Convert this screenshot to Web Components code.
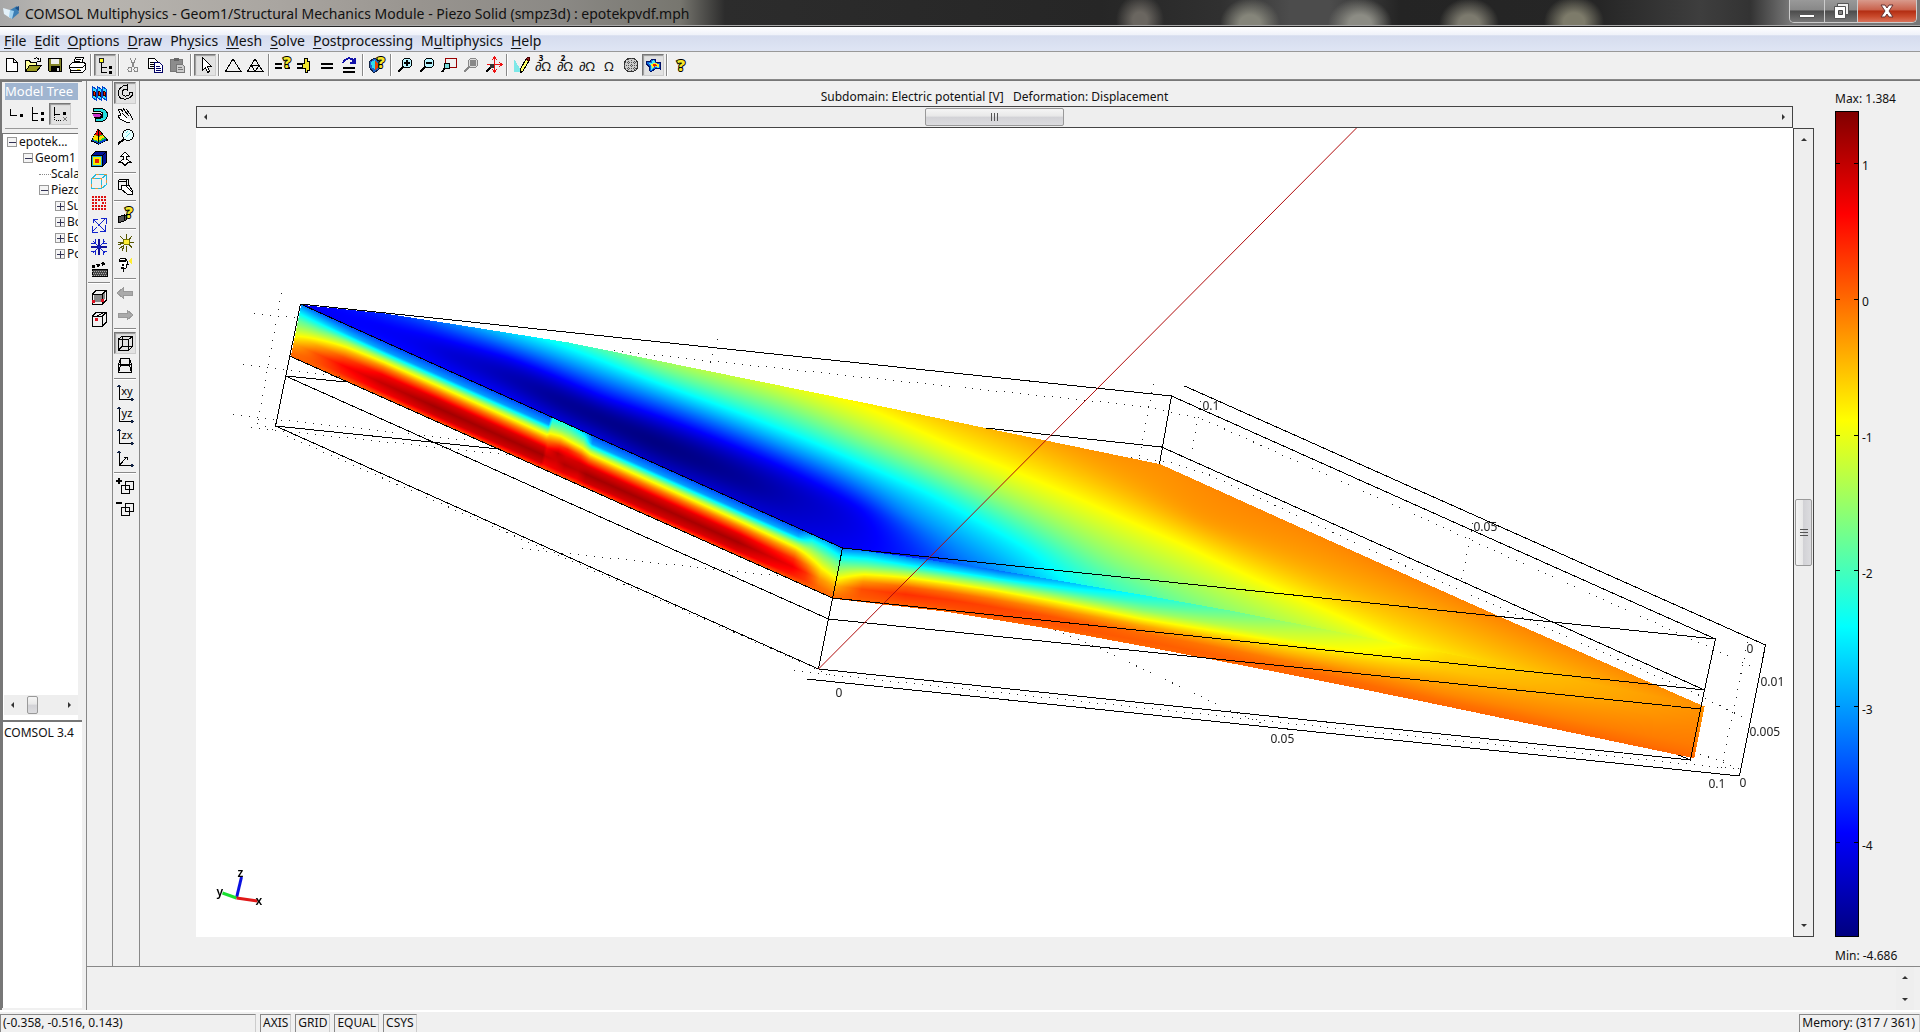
<!DOCTYPE html>
<html lang="en">
<head>
<meta charset="utf-8">
<title>COMSOL Multiphysics</title>
<style>
html,body{margin:0;height:100%;background:#f0f0f0;overflow:hidden}
body{font:12px/16px "Noto Sans","Open Sans",sans-serif;color:#111}
</style>
</head>
<body>
<comsol-app></comsol-app>
<script>
const base = `*{box-sizing:border-box}button{font:inherit;color:inherit;border:0;background:none;padding:0;margin:0}svg{display:block}`;
const define = (name, css, html, setup) => customElements.define(name, class extends HTMLElement {
  connectedCallback() {
    if (this.shadowRoot) return;
    const root = this.attachShadow({mode: "open"});
    root.innerHTML = `<style>${base}${css}</style>${typeof html === "function" ? html(this) : html}`;
    if (setup) setup(root, this);
  }
});

/* ---------- icon set, 20 x 20 grid ---------- */
const P = (d, s = "#000", f = "none", w = 1) => `<path d="${d}" stroke="${s}" fill="${f}" stroke-width="${w}"/>`;
const lens = (g, fill = "#b8f4ff", ink = "#000") => `<circle cx="12" cy="8" r="5" fill="${fill}" stroke="${ink}"/>${P("M8 12L3 17", ink, "none", 2)}${g}`;
const omega = (t, n) => `<text x="10" y="16" text-anchor="middle" font-size="13" fill="#111">${t}</text>${n ? `<text x="8" y="6" text-anchor="middle" font-size="8" font-weight="700">${n}</text>` : ""}`;
const axes = t => P("M4 3V16.5H18") + P("M4 1l2 3H2zM19 16.5l-3-2v4z", "none", "#124") + (t ? `<text x="12" y="12" text-anchor="middle" font-size="11">${t}</text>` : P("M4.500 16L12 8M9 8h3v3"));
const question = `<text x="14" y="13" text-anchor="middle" font-size="15" font-weight="900" fill="#f5e62a" stroke="#000" stroke-width="2" paint-order="stroke">?</text>`;
const cube = P("M3 7.500h10v10H3zM7 3.500h10v10M7 3.500L3 7.500M17 3.500l-4 4M17 13.500l-4 4");
const icons = {
  new: P("M5.500 3.500h7l4 4v9h-11zM12.500 3.500v4h4", "#000", "#fff"),
  open: P("M2.500 16.500v-11h4l1 2h6v3", "#000", "#ffff9a") + P("M2.500 16.500l4-6h12l-5 6z", "#000", "#9a9a20") + P("M11 4c2-2 4-1 5 1M17 3v3h-3"),
  save: P("M3.500 3.500h13v13h-12l-1-1z", "#000", "#85852a") + P("M6 4h8v5H6z", "none", "#eee") + P("M6 11h9v6H6z", "none", "#000") + P("M12 13h2v3h-2z", "none", "#ddd"),
  print: P("M6.500 8.500l2-6h8l-2 6M9 4.500h5M8 6.500h5", "#000", "#fff") + P("M2.500 10.500l3-3h12l1 2v5l-3 3h-12z", "#000", "#fff") + P("M3 12.500h13M4 15.500h10M16 12l3-3") + P("M10 14h3", "#e5d500"),
  tree: P("M4.500 3.500h4v4h-4z", "#222", "#ff2") + P("M6.500 8v9h5M6.500 12.500h5") + P("M14 11h3v3h-3zM14 16h3v3h-3z", "none", "#000"),
  tree1: P("M4.500 5v6h6") + P("M14 10h3v3h-3z", "none", "#000"),
  tree2: P("M4.500 3v13h5M4.500 9.500h5") + P("M13 8h3v3h-3zM13 14h3v3h-3z", "none", "#000"),
  tree3: P("M4.500 3v7h5") + P("M13 8h3v3h-3z", "none", "#000") + `<path d="M4.500 11v5h6" stroke="#000" fill="none" stroke-dasharray="1 1"/>` + P("M13 13l4 4M17 13l-4 4", "#777"),
  cut: P("M7 3l4 9M13 3l-4 9", "#888") + `<circle cx="7" cy="14.500" r="2" fill="none" stroke="#888"/><circle cx="13" cy="14.500" r="2" fill="none" stroke="#888"/>`,
  copy: P("M3.500 3.500h6l3 3v7h-9zM5 7.500h5M5 9.500h5M5 11.500h5", "#000", "#fff") + P("M9.500 7.500h5l3 3v7h-8zM11 11.500h4M11 13.500h5M11 15.500h5", "#006", "#fff"),
  paste: P("M3.500 4.500h12v12h-12z", "#777", "#8c8c8c") + P("M7 3h5v3H7z", "none", "#666") + P("M9.500 9.500h6l2 2v6h-8zM11 12.500h4M11 14.500h5", "#777", "#ccc"),
  pointer: P("M7.500 2.500v13l3-3 2 5 2-1-2-5h4z", "#000", "#fff"),
  tri: P("M10 4L2.500 16.500h15.500z"),
  trimesh: P("M10 4L2.500 16.500h15.500zM6.500 10.500h7.500L10 16.500z"),
  solveq: P("M2 9h7M2 13h7M12 13h5", "#000", "none", 2) + question,
  solve1: P("M2 9h7M2 13h7", "#000", "none", 2) + P("M9.500 3.500h3v3h2v9h-2v2h-2v-4h-3v-5h2z", "#000", "#f0e52c"),
  equal: P("M4 9h12M4 13h12", "#000", "none", 2),
  restart: P("M4 13h12M4 17h12", "#000", "none", 2) + P("M4 8c3-6 9-6 11-1M16 3v5h-5", "#11a", "none", 2),
  plotq: P("M3 6l5-3 4 3v8l-5 4-5-6z", "#124", "#26c") + P("M4 7l4-2v9l-3-1z", "none", "#3de") + P("M8 6l3 2v5l-3 2z", "none", "#e40") + question,
  zin: lens(P("M9 8h6M12 5v6", "#000", "none", 2)),
  zout: lens(P("M9 8h6", "#000", "none", 2)),
  zwin: P("M6.500 3.500h11v9h-11z", "#900") + `<circle cx="8" cy="11" r="3" fill="#7dd" stroke="#000"/>` + P("M6 13l-3 4", "#000", "none", 2),
  zsel: lens(P("M9 5h6v6H9z", "none", "#888"), "#ddd", "#888"),
  zext: P("M11.500 2v15M4 9.500h15M9 5l2.500-3 2.500 3M9 14l2.500 3 2.500-3M16 7l3 2.500-3 2.500", "#e11") + `<circle cx="9" cy="11" r="2.500" fill="#333"/>` + P("M7 13l-4 4", "#000", "none", 2),
  draw: P("M3 4v13h8z", "none", "#7de8e8") + P("M9 15L15 4l3 2-6 10-3 2z", "#000", "#ff6") + P("M15 4l2-2 2 1-1 3z", "#400", "#922"),
  om3: omega("∂Ω", "3"), om2: omega("∂Ω", "2"), om1: omega("∂Ω"), om0: omega("Ω"),
  mesh: `<circle cx="10" cy="10" r="7" fill="#ccc" stroke="#333"/><path d="M4 7h12M3 10h14M4 13h12M7 4v12M10 3v14M13 4v12" stroke="#555" fill="none" stroke-dasharray="1 1"/>`,
  post: P("M3 6.500l4 0 2-2.500h3l1 3 4 0v7l-4-1-5 4-2-2 1-3-4-3z", "#016", "#16d") + P("M5 8l4 0 1-3 2 2 1 2 3 0v4l-4-1-4 3 0-4z", "none", "#4ee") + P("M8 9l4-1 4 1v3l-4-1-3 2z", "none", "#fe2") + P("M10 9l5 1-4 2z", "none", "#e20"),
  help: `<text x="10" y="16" text-anchor="middle" font-size="16" font-weight="900" fill="#f5e62a" stroke="#000" stroke-width="2" paint-order="stroke">?</text>`,
  slice: [3, 8, 13].map(x => P(`M${x}.5 3.500l4 3v11l-4-3z`, "#04c", "#3df") + P(`M${x + 1} 8l2 1v4l-2-1z`, "#300", "#e20")).join(""),
  iso: P("M4 3.500h7c10 0 10 13 0 13H6v-3h4c5 0 5-7 0-7H4z", "#000", "#2dd") + P("M3 8.500h7c3 0 3 4 0 4H5", "#000", "#c3c"),
  sub: P("M9 2L2.500 14l7 3 9-4z", "#000", "#2c4") + P("M9 2L6 7.500l3 2 4-2z", "none", "#e00") + P("M6 7.500L3.500 12l6 2 6-4-2-2-4 2z", "none", "#fd0") + P("M3 13l6.500 2 7-3 1 1-8 4-6-3z", "none", "#04c") + P("M9.500 2v14"),
  bnd: P("M2.500 6.500h11v11h-11z", "#000", "#2ad") + P("M2.500 6.500l4-4h11l-4 4zM13.500 6.500l4-4v11l-4 4z", "#000", "#019") + P("M5 9h6v6H5z", "#ee0", "#e20", 2),
  edge: P("M2.500 7.500h10v10h-10zM7 3.500h10.500v10M7 3.500l-4 4M17.500 3.500l-5 4M17.500 13.500l-5 4", "#2bd") + `<path d="M2.500 7.500h10v10h-10zM7 3.500h10.500v10" stroke="#d94" fill="none" stroke-dasharray="3 5"/>`,
  maxmin: `<path d="M3 4h14M3 7h14M3 10h5M13 10h4M3 13h14M3 16h14" stroke="#d11" stroke-width="2" fill="none" stroke-dasharray="2 1"/>`,
  arrows: P("M3 11v6h6M3 17l5-5M9 4h-5v4M4 4l12 12M16 10v6h-5M17 3L9 11M12 3.500h5v5", "#12c"),
  flow: P("M2 10h16M10 2v16", "#119", "none", 2) + P("M4 4l12 12M16 4L4 16M6 2v4H2M14 2v4h4M2 14h4v4M18 14h-4v4", "#12c"),
  movie: P("M3 10h15v7H3z", "#000", "#444") + `<path d="M3 8l14-4" stroke="#000" stroke-width="3" stroke-dasharray="3 2"/>` + `<path d="M3 12h15M4 14h14M3 16h15" stroke="#aaa" stroke-dasharray="1 1"/>`,
  cubeface: P("M5 8h8l3-3v7l-4 3H5z", "none", "#888") + cube + P("M3 13h2v2H3zM12 12h2v2h-2z", "#d12", "#d12"),
  cubept: cube + P("M7 8l8-5") + P("M6 9h2v2H6z", "#d12", "#d12"),
  orbit: P("M8 3C0 8 3 17 11 16c5-1 7-4 7-7l-4 0 0 3c-5 3-9-1-5-6l3 1V2z", "#000", "#ddd"),
  hand: P("M3 4l3 0 2 3M8 3l4 6M11 4l4 5 3 6M3 4l3 6-3 1 2 3 6 3h4M12 13l-5-5M14 11l-4-5", "#000", "#fff"),
  mag: `<circle cx="13" cy="8" r="5.500" fill="#e6ffff" stroke="#000"/>` + P("M11 6l2-2M11 10l4-4", "#6dd") + P("M9 12l-6 5", "#000", "none", 2),
  dolly: P("M8.500 11V7H6l4-4 4 4h-2.500v4M8.500 10L4 13.500h3l3 3 3-3h3L11.500 10", "#000", "#fff"),
  boxhand: P("M3 4h8v8H3zM3 4l2-2h8v8l-2 2M11 4l2-2") + P("M7 8l3 0 7 7v2h-5l-6-5zM10 8l4 0 4 7", "#000", "#fff"),
  camq: P("M3 12l6-2v6l-6 2zM9 12l2-2v5l-2 1z", "#000", "#555") + question,
  light: P("M11 1v5M11 13v6M3 9h5M14 9h5M5 3l4 4M17 3l-3 4M4 16l5-4M17 15l-3-4M7 18l2-5M3 12l5-2", "#550") + `<circle cx="11.500" cy="9" r="3" fill="#fe3" stroke="#770"/>`,
  headlight: P("M4 5c3-3 7-2 8 1l1 3h-2v4l-3 1v3", "#000", "#fff") + P("M4 6h7M7 10h2M6 13h3", "#000", "none", 2) + P("M13 6l4-3v7z", "none", "#fe3"),
  back: P("M2 10l6-5v3h9v4H8v3z", "#999", "#aaa"),
  fwd: P("M18 10l-6-5v3H3v4h9v3z", "#999", "#aaa"),
  ortho: P("M3.500 6.500h10v11h-10zM7 3.500h10.500v10h-10.500zM7 3.500l-4 3M17.500 3.500l-4 3M17.500 13.500l-4 4M7 13.500l-4 4"),
  persp: P("M5.500 3.500h9v7h-9zM3.500 9.500h13v8h-13zM5.500 3.500l-2 6M14.500 3.500l2 6M5.500 10.500l-2 7M14.500 10.500l2 7"),
  xy: axes("xy"), yz: axes("yz"), zx: axes("zx"), xyz: axes(),
  plus: P("M6.500 8.500h8v8h-8zM10.500 4.500h8v8h-8z") + P("M1 3.500h6M4 1v6", "#000", "none", 2),
  minus: P("M6.500 8.500h8v8h-8zM10.500 4.500h8v8h-8z") + P("M1 3.500h6", "#000", "none", 2)
};

define("icon-button", `
:host{display:block;width:22px;height:22px;flex:none}
button{display:grid;place-items:center;width:22px;height:22px;border:1px solid transparent}
:host([pressed]) button{border-color:#777 #ccc #ccc #777;background:#e2e2e2;box-shadow:inset 1px 1px 1px #999}
svg{width:20px;height:20px;shape-rendering:crispEdges;overflow:visible;font-family:"Noto Sans",sans-serif}`,
  h => `<button type="button" aria-label="${h.getAttribute("icon")}"><svg viewBox="0 0 20 20">${icons[h.getAttribute("icon")]}</svg></button>`);

define("tool-bar", `
:host{display:flex;align-items:center}
:host([vertical]){flex-direction:column}
hr{flex:none;margin:0 2px;width:2px;height:22px;border:0;border-left:1px solid #888;border-right:1px solid #fff}
:host([vertical]) hr{margin:2px 0;width:22px;height:2px;border:0;border-top:1px solid #888;border-bottom:1px solid #fff}`,
  h => h.getAttribute("items").split(" ").map(n => n === "|" ? "<hr>" :
    `<icon-button icon="${n.replace("*", "")}" ${n.includes("*") ? "pressed" : ""}></icon-button>`).join(""));

define("title-bar", `
:host{display:flex;align-items:flex-start;height:27px;overflow:hidden;border-bottom:1px solid #222;box-shadow:inset 0 -1px #aaa;
background:
radial-gradient(ellipse 24px 26px at 1140px 20px,#6a6660 30%,transparent),
radial-gradient(ellipse 30px 26px at 1250px 24px,#85857a 35%,transparent),
radial-gradient(ellipse 32px 26px at 1360px 24px,#8c8c84 35%,transparent),
radial-gradient(ellipse 30px 26px at 1469px 24px,#7c7a6e 35%,transparent),
radial-gradient(ellipse 30px 26px at 1574px 22px,#7d7b6a 35%,transparent),
linear-gradient(90deg,#a8a8a8 0,#bbb8b3 60px,#a9a5a0 280px,#98948f 420px,#8b8985 560px,#77766f 680px,#2c2c2c 725px,#262626 1100px,#303030 1220px,#4c4c4c 1290px,#4c4c4c 1330px,#242424 1400px,#262626 1600px,#3e3e3e 1700px,#333 1750px,#777 1790px)}
.logo{margin:4px 5px 0 3px}
h1{margin:3px auto 0 0;font:14px/22px "Noto Sans","Open Sans",sans-serif;color:#111;white-space:nowrap}
.w{display:flex;margin-right:3px;height:23px;border:1px solid #ccc;border-top:0;border-radius:0 0 5px 5px;overflow:hidden}
.w button{width:35px;display:grid;place-items:center;background:linear-gradient(#999,#888 45%,#4c4c4c 50%,#777);border-right:1px solid #ccc}
.w button+button{width:33px}
.w .x{width:58px;border:0;background:linear-gradient(#d89a8c,#c9614b 45%,#b32d12 50%,#c94a2c 75%,#d9725a)}`, `
<svg class="logo" width="17" height="17" viewBox="0 0 17 17"><path d="M0 4l7 2v8l-6-4z" fill="#e4f2fb"/><path d="M7 6l7-4 2 7-7 6z" fill="#3c7fb5"/><path d="M7 6l4 1-2 8-3-2z" fill="#9fd0ee"/><path d="M12 4l4-2v5z" fill="#1c4f86"/></svg>
<h1>COMSOL Multiphysics - Geom1/Structural Mechanics Module - Piezo Solid (smpz3d) : epotekpvdf.mph</h1>
<div class="w"><button aria-label="Minimize"><svg width="18" height="18"><path d="M1.500 12.500h15v3h-15z" fill="#fff" stroke="#555"/></svg></button>
<button aria-label="Restore"><svg width="18" height="18"><path d="M5.500 1.500h11v11h-11z" fill="#eee" stroke="#555"/><path d="M2.500 4.500h11v12h-11z" fill="#fff" stroke="#555"/><path d="M6.500 8.500h4v4h-4z" fill="#888" stroke="#444"/></svg></button>
<button class="x" aria-label="Close"><svg width="18" height="16" viewBox="0 0 18 16"><path d="M3 2h4l2 3 2-3h4l-4 6 4 6h-4l-2-3-2 3H3l4-6z" fill="#fff" stroke="#633"/></svg></button></div>`);

define("menu-bar", `
:host{display:block;border-bottom:1px solid #999;background:linear-gradient(#fff,#eef1f9 34%,#d5dcee 36%,#dfe5f4)}
nav{display:flex;gap:8px;height:24px;padding:4px 4px 0;align-items:center;font-size:14px;line-height:20px}u{text-underline-offset:2px}`,
  "<nav>" + ["_File", "_Edit", "_Options", "_Draw", "Ph_ysics", "_Mesh", "_Solve", "_Postprocessing", "M_ultiphysics", "_Help"]
    .map(s => `<button type="button">${s.replace(/_(.)/, "<u>$1</u>")}</button>`).join("") + "</nav>");

define("scroll-bar", `
:host{display:flex;min-width:0;min-height:0;background:#eee}
:host([framed]){border:1px solid #444}
:host([vertical]){flex-direction:column}
button{flex:none;width:18px;height:100%;display:grid;place-items:center}
:host([vertical]) button{width:100%;height:20px}
.track{flex:1;display:flex;min-width:0;min-height:0}
:host([vertical]) .track{flex-direction:column}
.track i{flex:var(--a,1)}.track i:last-child{flex:var(--b,1)}
.thumb{flex:0 0 var(--t,0px);display:grid;place-items:center;border:1px solid #999;border-radius:2px;background:linear-gradient(#f5f5f5,#e8e8e8 45%,#d2d2d6 50%,#dcdcdf);margin:1px 0}
:host([vertical]) .thumb{background:linear-gradient(90deg,#f5f5f5,#e8e8e8 45%,#d2d2d6 50%,#dcdcdf);margin:0 1px}
:host([nothumb]) .thumb{display:none}`,
  h => {
    const v = h.hasAttribute("vertical");
    const tri = (a, b) => `<svg width="8" height="8" viewBox="0 0 8 8"><path d="${v ? a : b}" fill="#333"/></svg>`;
    return `<button type="button" aria-label="Back">${tri("M1 6l3-3 3 3z", "M5 1L2 4l3 3z")}</button><div class="track"><i></i><div class="thumb">${h.hasAttribute("grip") ? `<svg width="12" height="12"><path d="${v ? "M2 2.500h8M2 5.500h8M2 8.500h8" : "M2.500 2v8M5.500 2v8M8.500 2v8"}" stroke="#555"/></svg>` : ""}</div><i></i></div><button type="button" aria-label="Forward">${tri("M1 2l3 3 3-3z", "M3 1l3 3-3 3z")}</button>`;
  });

define("tree-item", `
:host{display:flex;align-items:center;height:16px;white-space:nowrap;padding-left:calc(var(--d)*16px + 3px)}
b{flex:none;display:grid;place-items:center;width:10px;height:10px;border:1px solid #999;background:#f4f4f4;margin-right:2px}
i{flex:none;width:12px;height:1px;border-top:1px dotted #888}`,
  h => {
    h.style.setProperty("--d", h.getAttribute("depth"));
    const s = h.getAttribute("state");
    return (s ? `<b><svg width="8" height="8" shape-rendering="crispEdges"><path d="M1 4.500h7${s === "plus" ? "M4.500 1v7" : ""}" stroke="#335"/></svg></b>` : "<i></i>") + "<slot></slot>";
  });

define("model-tree", `
:host{display:flex;flex-direction:column;min-height:0;padding:1px 4px 0 3px;border-left:2px solid #777;border-top:1px solid #777;background:#f0f0f0}
h2{margin:0 0 3px;padding:0;font:13px/17px "Noto Sans",sans-serif;color:#fff;background:#a0b5d0;height:17px;white-space:nowrap;overflow:hidden}
.bar{display:flex;padding-bottom:3px;border-bottom:1px solid #999;margin-bottom:4px}
.box{border:solid #777;border-width:1px 0 0 1px;background:#fff;min-height:0;overflow:hidden;margin-left:-3px;padding-left:1px}
.tree{flex:1;display:flex;flex-direction:column}
.list{flex:1;overflow:hidden}
scroll-bar{height:20px;--t:11px;--a:3;--b:15;margin-bottom:5px}
.info{flex:0 0 288px;border-top:2px solid #777;padding-top:3px;margin-right:-4px;margin-bottom:2px;white-space:nowrap}`, `
<h2>Model Tree</h2>
<div class="bar"><icon-button icon="tree1"></icon-button><icon-button icon="tree2"></icon-button><icon-button icon="tree3" pressed></icon-button></div>
<div class="box tree"><div class="list">
<tree-item depth="0" state="minus">epotek...</tree-item>
<tree-item depth="1" state="minus">Geom1</tree-item>
<tree-item depth="2">Scala</tree-item>
<tree-item depth="2" state="minus">Piezo</tree-item>
<tree-item depth="3" state="plus">Su</tree-item>
<tree-item depth="3" state="plus">Bo</tree-item>
<tree-item depth="3" state="plus">Ed</tree-item>
<tree-item depth="3" state="plus">Po</tree-item>
</div><scroll-bar></scroll-bar></div>
<div class="box info">COMSOL 3.4</div>`);

/* ---------- solution plot ---------- */
const OX = 196, OY = 128, W = 1596, H = 809;
const lerpTable = (pts, x) => {
  if (x <= pts[0][0]) return pts[0][1];
  for (let i = 1; i < pts.length; i++) if (x <= pts[i][0]) {
    const [a, b] = pts[i - 1], [c, d] = pts[i];
    return b + (d - b) * (x - a) / (c - a);
  }
  return pts[pts.length - 1][1];
};
const jet = v => {
  const c = k => Math.max(0, Math.min(1, 1.5 - Math.abs(4 * v - k))) * 255;
  return [c(3), c(2), c(1)];
};
/* electric potential at points of the top face: x, y, normalised value */
const samples = [
  [299,304,.11],[322,307,.12],[383,313,.17],[448,323,.25],[500,333,.31],[555,343,.375],[606,353,.44],[648,362,.5],[750,381,.57],[860,402,.635],[984,427,.695],[1098,451,.73],[1158,464,.735],
  [380,340,.14],[450,371,.12],[506,397,.12],[600,439,.09],[710,488,.08],[800,527,.09],[842,547,.115],
  [380,328,.115],[450,354,.08],[506,376,.05],[555,398,.02],[600,418,.01],[650,440,.0],[700,462,.01],[750,485,.03],[800,508,.07],
  [420,330,.14],[506,357,.125],[600,396,.125],[710,436,.125],[780,466,.125],[860,507,.13],[890,547,.14],
  [506,346,.22],[600,378,.25],[710,419,.25],[780,448,.25],[860,485,.25],[902,513,.25],[960,555,.25],
  [600,360,.375],[710,402,.375],[780,429,.375],[860,463,.375],[927,493,.375],[1033,553,.375],
  [780,407,.49],[862,440,.5],[980,493,.5],[1106,560,.5],[951,447,.62],[1082,502,.62],[1180,545,.62],[1249,578,.62],
  [1098,468,.71],[1200,520,.72],[1300,562,.71],[1420,593,.73],[1300,530,.74],[1420,582,.745],[1498,616,.745],[1600,661,.74],[1703,706,.735],
  [992,569,.26],[1074,583,.39],[1150,596,.46],[1228,610,.52],[1350,633,.59],[1419,614,.7],[1340,600,.67],[1400,643,.63],[1500,655,.69],[1600,682,.71]
];
const solve = (A, b) => {
  const n = b.length;
  for (let i = 0; i < n; i++) {
    let p = i;
    for (let r = i + 1; r < n; r++) if (Math.abs(A[r][i]) > Math.abs(A[p][i])) p = r;
    [A[i], A[p]] = [A[p], A[i]]; [b[i], b[p]] = [b[p], b[i]];
    for (let r = i + 1; r < n; r++) {
      const f = A[r][i] / A[i][i];
      if (!f) continue;
      for (let c = i; c < n; c++) A[r][c] -= f * A[i][c];
      b[r] -= f * b[i];
    }
  }
  for (let i = n - 1; i >= 0; i--) {
    for (let c = i + 1; c < n; c++) b[i] -= A[i][c] * b[c];
    b[i] /= A[i][i];
  }
  return b;
};
/* thin-plate spline in coordinates turned along the iso-lines */
const frame = (x, y) => {
  const u = (x - 300) * .91 + (y - 300) * .41, v = (y - 300) * .91 - (x - 300) * .41;
  return [u / 400, v / 130];
};
const kernel = d2 => d2 < 1e-12 ? 0 : d2 * Math.log(d2);
const spline = () => {
  const pts = samples.map(([x, y]) => frame(x, y)), n = pts.length;
  const A = [], b = samples.map(s => s[2]).concat([0, 0, 0]);
  for (let i = 0; i < n; i++)
    A.push(pts.map((q, j) => kernel((pts[i][0] - q[0]) ** 2 + (pts[i][1] - q[1]) ** 2) + (i === j ? .008 : 0)).concat([1, pts[i][0], pts[i][1]]));
  A.push(pts.map(() => 1).concat([0, 0, 0]), pts.map(p => p[0]).concat([0, 0, 0]), pts.map(p => p[1]).concat([0, 0, 0]));
  const w = solve(A, b);
  return (x, y) => {
    const [u, v] = frame(x, y);
    let s = w[n] + w[n + 1] * u + w[n + 2] * v;
    for (let i = 0; i < n; i++) s += w[i] * kernel((u - pts[i][0]) ** 2 + (v - pts[i][1]) ** 2);
    return s;
  };
};
const skew = (x, y) => x + .2 * y;
const byskew = a => a.map(([x, y]) => [skew(x, y), y]);
const crest = byskew([[299.6,304.3],[841.6,547.7],[894,554.5],[992,569],[1074,583],[1150,596],[1228,610],[1350,634],[1500,664],[1703,706]]);
const foot = byskew([[289.4,355.7],[832.2,598.3],[943,611],[1041,627],[1147,646.7],[1300,676.4],[1420,700.7],[1691,757.4]]);
const roof = [[299.6,304.3],[383,313],[448,323],[567,342],[860,401.7],[980,426.7],[1158.8,463.7],[1300,527.5],[1498,616],[1703,706]];
/* face tables: position along the face, then values at t = 0, .15, .3, .45, .6, .75, .9, 1 */
const left = [
  [0,   .25,.36,.47,.54,.62,.70,.76,.78],
  [.04, .22,.34,.48,.60,.71,.79,.79,.78],
  [.09, .2, .31,.53,.68,.80,.87,.84,.78],
  [.16, .2, .28,.55,.74,.88,.93,.88,.78],
  [.26, .2, .28,.56,.75,.91,.965,.92,.79],
  [.46, .2, .28,.56,.75,.91,.965,.92,.79],
  [.465,.36,.48,.62,.76,.88,.93,.88,.79],
  [.485,.4, .5, .66,.82,.94,.92,.89,.79],
  [.50, .38,.5, .64,.84,.91,.95,.90,.79],
  [.525,.3, .46,.62,.80,.92,.94,.89,.79],
  [.54, .2, .28,.56,.75,.91,.965,.92,.79],
  [.82, .2, .28,.56,.75,.90,.96,.91,.79],
  [.92, .2, .30,.55,.71,.83,.89,.85,.78],
  [.945,.28,.42,.54,.64,.75,.83,.82,.775],
  [.97, .28,.4, .5, .58,.66,.73,.77,.775],
  [1,   .24,.36,.47,.54,.62,.70,.75,.775]];
const right = [
  [0,   .24,.36,.46,.54,.62,.70,.75,.775],
  [.03, .27,.38,.49,.62,.73,.80,.79,.775],
  [.08, .24,.36,.52,.66,.78,.83,.80,.775],
  [.18, .23,.35,.52,.66,.76,.81,.80,.775],
  [.35, .39,.44,.51,.61,.71,.77,.785,.775],
  [.52, .53,.56,.59,.65,.70,.75,.775,.775],
  [.7,  .66,.67,.68,.70,.72,.74,.765,.775],
  [1,   .735,.735,.74,.745,.75,.755,.765,.775]];
const stops = [0, .15, .3, .45, .6, .75, .9, 1];
const face = (table, s, t) => {
  let i = 1;
  while (i < table.length - 1 && s > table[i][0]) i++;
  const a = table[i - 1], b = table[i], k = Math.max(0, Math.min(1, (s - a[0]) / (b[0] - a[0])));
  let j = 1;
  while (j < 7 && t > stops[j]) j++;
  const m = (t - stops[j - 1]) / (stops[j] - stops[j - 1]);
  const row = r => r[j] + (r[j + 1] - r[j]) * m;
  return row(a) * (1 - k) + row(b) * k;
};
const paint = canvas => {
  const ctx = canvas.getContext("2d"), img = ctx.createImageData(W, H), field = spline();
  const q0 = crest[0][0], qe = crest[1][0], q1 = crest[crest.length - 1][0];
  for (let y = 300; y < 760; y++) for (let x = 289; x < 1706; x++) {
    const q = skew(x, y);
    if (q < q0 || q > q1) continue;
    const top = lerpTable(crest, q);
    let v;
    if (y < top) {
      if (y < lerpTable(roof, x)) continue;
      v = Math.max(0, Math.min(.75, field(x, y)));
    } else {
      const bottom = lerpTable(foot, q);
      if (y > bottom) continue;
      const t = (y - top) / (bottom - top);
      v = q < qe ? face(left, (q - q0) / (qe - q0), t) : face(right, (q - qe) / (q1 - qe), t);
    }
    const c = jet(v), o = ((y - OY) * W + x - OX) * 4;
    img.data[o] = c[0]; img.data[o + 1] = c[1]; img.data[o + 2] = c[2]; img.data[o + 3] = 255;
  }
  ctx.putImageData(img, 0, 0);
};
const solid = "M300 304L842 548L1715 639M289 356L832 598L1704 690M285 376L828 619L1700 709M275 426L818 669L1690 760M300 304L275 426M842 548L818 669M300 304L1171 396L1715 639L1704 690L1161 447L985 428M1171 396L1159 464M1704 690L1690 760L1678 755M285 376L346 382M275 426L498 449M806 679L1739 776L1765 645L1184 386";
const dotted = "M281 293L257 423M246 313L297 318M235 363L342 377M225 414L465 440M243 427L510 455M257 423L830 675M786 670L860 678L1229 717L1420 737L1736 769M514 548L779 576M717 339L710 363M606 350L860 377L1149 407L1204 420L1420 517L1470 540L1704 645L1752 667M1153 384L1139 457M1202 393L1191 453M1123 457L1172 463L1209 475L1420 573L1688 690L1744 718M1474 515L1460 586M1747 642L1721 768M1055 630L1098 648L1229 710L1264 724M1700 754L1740 769";
const label = (x, y, t) => `<text x="${x}" y="${y}">${t}</text>`;

define("plot-view", `
:host{display:grid;grid-template:minmax(0,1fr)/minmax(0,1fr);background:#fff;min-width:0;min-height:0;overflow:hidden}
canvas,svg{grid-area:1/1;width:100%;height:100%;object-fit:contain}
text{font:12px "Noto Sans",sans-serif;fill:#222}g text{font-weight:600;fill:#000}`, `
<canvas width="${W}" height="${H}"></canvas>
<svg viewBox="${OX} ${OY} ${W} ${H}" fill="none">
<g shape-rendering="crispEdges"><path d="${solid}" stroke="#000"/><path d="${dotted}" stroke="#222" stroke-dasharray="1 7"/></g><path d="M818 669L1356 128" stroke="#b00c0c"/>
<g stroke-width="3"><path d="M236 898L241 877" stroke="#0a10e0"/><path d="M236 898L222 893" stroke="#18e030"/><path d="M236 898L257 901" stroke="#e01818"/></g>
${label(835, 697, "0")}${label(1270, 743, "0.05")}${label(1202, 410, "0.1")}${label(1473, 531, "0.05")}${label(1746, 653, "0")}${label(1760, 686, "0.01")}${label(1749, 736, "0.005")}${label(1708, 788, "0.1")}${label(1739, 787, "0")}
<g>${label(237, 877, "z")}${label(216, 896, "y")}${label(255, 905, "x")}</g>
</svg>`, root => paint(root.querySelector("canvas")));

const tick = v => {
  const p = ((1.384 - v) / 6.07 * 100).toFixed(2) + "%";
  return `<line x1="0" x2="5" y1="${p}" y2="${p}"/><line x1="19" x2="24" y1="${p}" y2="${p}"/><text x="27" y="${p}" dy="7">${v}</text>`;
};
define("color-legend", `
:host{display:block;min-height:0}
svg{width:60px;height:100%;overflow:visible}line{stroke:#000;shape-rendering:crispEdges}text{font:12px "Noto Sans",sans-serif;fill:#111}`, `
<svg><defs><linearGradient id="jet" x2="0" y2="1"><stop offset="0" stop-color="#800000"/><stop offset=".125" stop-color="#f00"/><stop offset=".375" stop-color="#ff0"/><stop offset=".625" stop-color="#0ff"/><stop offset=".875" stop-color="#00f"/><stop offset="1" stop-color="#000080"/></linearGradient></defs>
<rect width="23" height="100%" fill="url(#jet)" stroke="#000" shape-rendering="crispEdges"/>${[1, 0, -1, -2, -3, -4].map(tick).join("")}</svg>`);

define("plot-pane", `
:host{display:grid;grid-template:25px 22px minmax(0,1fr) 29px/56px minmax(0,1fr) 21px 21px 85px;border-left:1px solid #888;min-width:0;min-height:0}
.t{grid-area:1/2;text-align:center;padding-top:8px;white-space:pre;line-height:16px}
.h{grid-area:2/2;--t:139px;--a:711;--b:711}
plot-view{grid-area:3/2}
.v{grid-area:3/3;--t:67px;--a:345;--b:345}
color-legend{grid-area:2/5/4/6;margin-top:5px;margin-bottom:1px}
.max{grid-area:1/5;padding-top:10px;white-space:nowrap}.min{grid-area:4/5;padding-top:11px;white-space:nowrap}`, `
<div class="t">Subdomain: Electric potential [V]   Deformation: Displacement</div>
<scroll-bar class="h" framed grip></scroll-bar><plot-view></plot-view><scroll-bar class="v" framed vertical grip></scroll-bar>
<div class="max">Max: 1.384</div><color-legend></color-legend><div class="min">Min: -4.686</div>`);

define("status-bar", `
:host{display:flex;gap:4px;height:22px;padding-top:2px;border-top:2px solid #fff;background:#f0f0f0}
span{border:solid #888;border-width:1px 1px 0 1px;border-right-color:#ccc;padding:0 2px;white-space:nowrap;line-height:16px;font-size:12px}
.p{width:256px}.m{margin-left:auto;padding:0 4px 0 2px}`, `
<span class="p">(-0.358, -0.516, 0.143)</span><span>AXIS</span><span>GRID</span><span>EQUAL</span><span>CSYS</span><span class="m">Memory: (317 / 361)</span>`);

define("comsol-app", `
:host{display:grid;grid-template-rows:auto auto auto minmax(0,1fr) auto;height:100vh;background:#f0f0f0}
.top{height:28px;padding-bottom:1px;border-bottom:1px solid #888}
main{display:grid;grid-template:minmax(0,1fr) 44px/82px 4px 26px 27px minmax(0,1fr);min-height:0;border-top:1px solid #777}
model-tree{grid-area:1/1/3/2}
.a,.b{grid-row:1;border-left:1px solid #888;padding-top:1px}
.a{grid-column:3;padding-right:1px}.b{grid-column:4;padding-right:2px}
plot-pane{grid-area:1/5}
.log{grid-area:2/3/3/6;display:flex;justify-content:flex-end;padding-right:6px;border:solid #888;border-width:1px 0 0 1px}
.log scroll-bar{width:18px}`, `
<title-bar></title-bar><menu-bar></menu-bar>
<tool-bar class="top" items="new open save print | tree* | cut copy paste | pointer* | tri trimesh | solveq solve1 equal restart | plotq | zin zout zwin zsel zext | draw om3 om2 om1 om0 mesh post* | help"></tool-bar>
<main><model-tree></model-tree>
<tool-bar class="a" vertical items="slice iso sub bnd edge maxmin arrows flow movie | cubeface cubept"></tool-bar>
<tool-bar class="b" vertical items="orbit* hand mag dolly | boxhand | camq | light headlight | back fwd | ortho* persp | xy yz zx xyz | plus minus"></tool-bar>
<plot-pane></plot-pane>
<div class="log"><scroll-bar vertical nothumb></scroll-bar></div></main>
<status-bar></status-bar>`);
</script>
</body>
</html>
